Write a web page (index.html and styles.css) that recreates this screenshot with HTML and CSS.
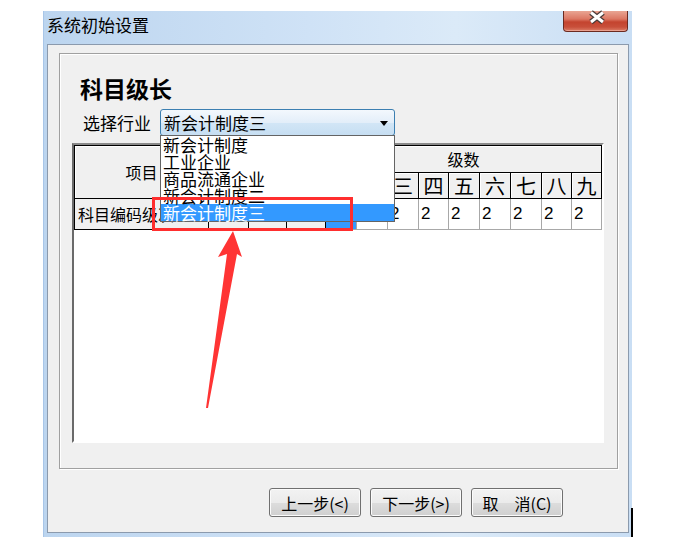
FILE: index.html
```html
<!DOCTYPE html>
<html lang="zh">
<head>
<meta charset="utf-8">
<title>系统初始设置</title>
<link rel="stylesheet" href="styles.css">
</head>
<body>
<div class="window">
  <div class="titlebar">
    <span class="title">系统初始设置</span>
    <div class="close">
      <svg class="close-x" width="65" height="21" viewBox="0 0 65 21">
        <path d="M28 2.5 L40 12 M40 2.5 L28 12" stroke="#4a3a38" stroke-width="5.5" fill="none"/>
        <path d="M28 2.5 L40 12 M40 2.5 L28 12" stroke="#ffffff" stroke-width="3" fill="none"/>
      </svg>
    </div>
  </div>
  <div class="client">
    <div class="group">
      <h1 class="heading">科目级长</h1>
      <div class="industry-row">
        <span class="label">选择行业</span>
        <div class="combo">
          <span class="combo-text">新会计制度三</span>
          <span class="combo-arrow"></span>
          <ul class="combo-list">
            <li>新会计制度</li>
            <li>工业企业</li>
            <li>商品流通企业</li>
            <li>新会计制度二</li>
            <li class="selected">新会计制度三</li>
          </ul>
        </div>
      </div>
      <div class="grid">
        <table class="levels">
          <colgroup>
            <col class="c-item"><col class="c-a"><col class="c-b"><col class="c-c">
            <col class="c-n"><col class="c-n"><col class="c-n"><col class="c-m"><col class="c-n"><col class="c-n"><col class="c-n"><col class="c-m"><col class="c-m">
          </colgroup>
          <tr class="head1">
            <th rowspan="2">项目</th>
            <th rowspan="2"></th>
            <th rowspan="2"></th>
            <th rowspan="2"></th>
            <th colspan="9">级数</th>
          </tr>
          <tr class="head2">
            <th>一</th><th>二</th><th>三</th><th>四</th><th>五</th><th>六</th><th>七</th><th>八</th><th>九</th>
          </tr>
          <tr class="data">
            <td class="fixed name">科目编码级次</td>
            <td class="fixed"></td>
            <td class="fixed"></td>
            <td class="fixed"></td>
            <td class="sel">2</td>
            <td>2</td><td>2</td><td>2</td><td>2</td><td>2</td><td>2</td><td>2</td><td>2</td>
          </tr>
        </table>
      </div>
    </div>
    <div class="buttons">
      <button class="btn">上一步(&lt;)</button>
      <button class="btn">下一步(&gt;)</button>
      <button class="btn">取　消(C)</button>
    </div>
  </div>
</div>
<div class="mark-box"></div>
<svg class="mark-arrow" width="683" height="549" viewBox="0 0 683 549">
  <polygon points="233,231 242,257 237,254 208,408 206,408 227,254 218,257" fill="#ff3434"/>
</svg>
<div class="edge-line"></div>
</body>
</html>
```

FILE: styles.css
```css
* { box-sizing: border-box; }
html, body { margin: 0; padding: 0; }
body {
  position: relative;
  width: 683px;
  height: 549px;
  overflow: hidden;
  background: #fff;
  color: #000;
  font-family: "Noto Sans CJK SC", "Noto Sans", sans-serif;
}

.window {
  margin: 11px 0 0 43px;
  width: 589px;
  height: 526px;
  padding: 0 3px 4px 3px;
  display: flex;
  flex-direction: column;
  background: linear-gradient(to right, #bcd5ef 0%, #cfe2f6 45%, #dbeaf8 70%, #c9def4 100%);
  border-left: 1px solid #a8c6e8;
}

.titlebar {
  height: 33px;
  display: flex;
  justify-content: space-between;
  align-items: flex-start;
  flex: none;
}
.title {
  margin-top: 3px;
  font-size: 17px;
  line-height: 21px;
}
.close {
  width: 65px;
  height: 21px;
  margin-right: 1px;
  border: 1px solid #6b2a20;
  border-top: none;
  border-radius: 0 0 4px 4px;
  background: linear-gradient(#e9a593 0%, #dc7763 40%, #c4442f 55%, #c84f3a 80%, #dc7d67 100%);
  box-shadow: inset 0 -1px 0 #e9a08f;
}
.close-x { display: block; margin: -1px 0 0 -1px; }

.client {
  flex: none;
  height: 489px;
  border: 1px solid #8b9aad;
  background: #f0f0f0;
}

.group {
  margin: 8px 0 0 11px;
  width: 559px;
  height: 416px;
  padding: 0 13px 0 12px;
  border: 1px solid #a0a0a0;
  box-shadow: inset 1px 1px 0 #fff, 1px 1px 0 #fff;
}
.heading {
  margin: 20px 0 0 8px;
  font-size: 23px;
  line-height: 28px;
  font-weight: bold;
}

.industry-row {
  margin-top: 7px;
  height: 27px;
  display: flex;
  align-items: center;
}
.label {
  margin: 0 9px 0 11px;
  font-size: 17px;
  line-height: 20px;
  white-space: nowrap;
}
.combo {
  position: relative;
  z-index: 5;
  width: 235px;
  height: 27px;
  border: 1px solid #3c7fb1;
  border-radius: 3px;
  background: linear-gradient(#f3f8fd 0%, #e3eef9 50%, #d2e6f6 51%, #c6def2 100%);
}
.combo-text {
  display: block;
  padding-left: 3px;
  font-size: 17px;
  line-height: 25px;
  white-space: nowrap;
}
.combo-arrow {
  position: absolute;
  right: 6px;
  top: 11px;
  width: 0;
  height: 0;
  border-left: 4px solid transparent;
  border-right: 4px solid transparent;
  border-top: 5px solid #000;
}
.combo-list {
  position: absolute;
  left: -1px;
  top: 25px;
  width: 235px;
  height: 87px;
  margin: 0;
  padding: 0;
  list-style: none;
  background: #fff;
  border: 1px solid #646464;
}
.combo-list li {
  height: 17px;
  line-height: 17px;
  font-size: 17px;
  padding-left: 2px;
  white-space: nowrap;
}
.combo-list li.selected {
  background: #3399ff;
  color: #fff;
}

.grid {
  margin-top: 7px;
  width: 532px;
  height: 300px;
  border-style: solid;
  border-width: 2px;
  border-color: #8a8a8a #fff #fff #6a6a6a;
  background: #fff;
}
.levels {
  border-collapse: collapse;
  table-layout: fixed;
  width: 528px;
}
.c-item { width: 134px; }
.c-a { width: 40px; }
.c-b { width: 38px; }
.c-c { width: 39px; }
.c-n { width: 31px; }
.c-m { width: 30px; }

.levels th {
  padding: 0;
  background: #f0f0f0;
  border: 1px solid #000;
  font-weight: normal;
  font-size: 16px;
  box-shadow: inset 1px 1px 0 #fff;
  white-space: nowrap;
}
.head1 th { height: 27px; line-height: 20px; }
.head2 th { height: 26px; font-size: 20px; line-height: 22px; }

.levels td {
  height: 31px;
  padding: 0 0 0 2px;
  border: 1px solid #a8a8a8;
  font-family: "Liberation Sans", sans-serif;
  font-size: 17px;
  text-align: left;
  vertical-align: middle;
  white-space: nowrap;
  overflow: hidden;
}
.levels td.fixed {
  background: #f0f0f0;
  border-color: #000;
}
.levels td.name {
  padding-left: 3px;
  font-family: "Noto Sans CJK SC", sans-serif;
  font-size: 16px;
}
.levels td.sel {
  background: #3399ff;
  color: #fff;
}

.buttons {
  margin-top: 19px;
  padding-right: 65px;
  display: flex;
  justify-content: flex-end;
  gap: 9px;
}
.btn {
  width: 92px;
  height: 29px;
  padding: 0;
  border: 1px solid #707070;
  border-radius: 3px;
  background: linear-gradient(#f2f2f2 0%, #ebebeb 50%, #dddddd 51%, #cfcfcf 100%);
  box-shadow: inset 0 0 0 1px #fbfbfb;
  font-family: "Noto Sans CJK SC", sans-serif;
  font-size: 16px;
  color: #000;
  white-space: nowrap;
}

.mark-box {
  position: absolute;
  left: 152px;
  top: 197px;
  width: 201px;
  height: 34px;
  border: 3px solid #ff2e2e;
  z-index: 10;
}
.mark-arrow {
  position: absolute;
  left: 0;
  top: 0;
  z-index: 10;
  pointer-events: none;
}
.edge-line {
  position: absolute;
  left: 631px;
  top: 508px;
  width: 2px;
  height: 29px;
  background: #000;
  z-index: 10;
}
```
